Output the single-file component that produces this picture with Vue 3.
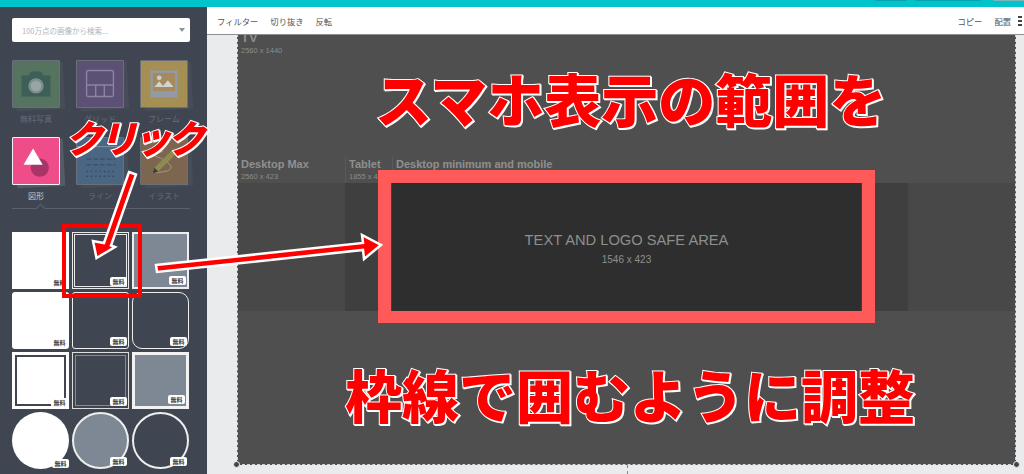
<script setup>
const row1 = [
  { name: '無料写真', cls: 'green', icon: 'camera' },
  { name: 'グリッド', cls: 'purple', icon: 'grid' },
  { name: 'フレーム', cls: 'yellow', icon: 'frame' },
]
const row2 = [
  { name: '図形', cls: 'pink', icon: 'shape' },
  { name: 'ライン', cls: 'blue', icon: 'line' },
  { name: 'イラスト', cls: 'brown', icon: 'pencil' },
]
const categories = [...row1, ...row2]
const shapes = [
  'solid', 'outline-in', 'gray-in',
  'solid r3', 'outline', 'outline r10',
  'solid-notch', 'double', 'gray-thick',
  'solid round', 'gray-ring round', 'outline round',
]
</script>

<template>
  <div class="page">
    <header class="topbar">
      <span class="chip c1"></span>
      <span class="chip c2"></span>
      <span class="chip c3"></span>
    </header>
    <div class="body">
      <aside class="sidebar">
        <div class="search">
          <span>100万点の画像から検索...</span>
          <i class="caret"></i>
        </div>
        <div class="cats">
          <div v-for="c in categories" :key="c.name" class="cat" :class="{ active: c.icon === 'shape' }">
            <div class="stack">
              <div class="back"></div>
              <div class="tile" :class="c.cls">
                <svg viewBox="0 0 48 48" width="46" height="46">
                  <g v-if="c.icon === 'camera'">
                    <path d="M9 15h7l3-4h10l3 4h7v22H9z" fill="#3c5f58" />
                    <circle cx="24" cy="26" r="8" fill="#7f8f8d" />
                    <circle cx="24" cy="26" r="5.5" fill="#98a5a3" />
                  </g>
                  <g v-else-if="c.icon === 'grid'" fill="none" stroke="#8a84a0" stroke-width="1.5">
                    <rect x="10" y="10" width="28" height="27" rx="1.5" />
                    <path d="M10 25h28M19.500 25v12M28.500 25v12" />
                  </g>
                  <g v-else-if="c.icon === 'frame'">
                    <rect x="10" y="10" width="28" height="28" fill="#929aa6" />
                    <rect x="12.500" y="12.500" width="23" height="19" fill="#a58a5c" />
                    <circle cx="19" cy="17.500" r="2.500" fill="#c9cdd2" />
                    <path d="M14 27l5-6 4 5 5-6 6 7z" fill="#d0d3d6" />
                  </g>
                  <g v-else-if="c.icon === 'shape'">
                    <circle cx="28" cy="31" r="9.500" fill="#a93468" />
                    <path d="M21 11l10 17H11z" fill="#fff" />
                  </g>
                  <g v-else-if="c.icon === 'line'">
                    <path d="M0 9h46" stroke="#8095a8" fill="none" />
                    <path d="M10 22h30M10 28h30" stroke="#34495e" stroke-dasharray="5 2" fill="none" />
                    <path d="M10 35h30M10 40h30" stroke="#34495e" stroke-dasharray="1.500 3" fill="none" stroke-width="1.500" />
                  </g>
                  <g v-else>
                    <path d="M12 36q14 0 18-3t-3-8t-12-6t8-5" stroke="#a89a82" fill="none" />
                    <path d="M34 11l4 4-20 20-6 2 2-6z" fill="#8e8a52" />
                    <path d="M12 37l2-6 4 4z" fill="#3c3c3c" />
                  </g>
                </svg>
              </div>
            </div>
            <div class="cat-name">{{ c.name }}</div>
          </div>
        </div>
        <div class="divider"><i></i></div>
        <div class="shapes">
          <div v-for="(s, i) in shapes" :key="i" class="shape" :class="s">
            <b>無料</b>
          </div>
        </div>
      </aside>
      <main class="main">
        <nav class="toolbar">
          <span>フィルター</span>
          <span>切り抜き</span>
          <span>反転</span>
          <span class="grow"></span>
          <span>コピー</span>
          <span>配置</span>
          <svg class="more" width="4" height="14" viewBox="0 0 4 14"><path d="M0 2h4v2H0zM0 6h4v2H0zM0 10h4v2H0z" fill="#444" /></svg>
        </nav>
        <div class="work">
          <div class="canvas">
            <section class="tv">
              <h4>TV</h4>
              <small>2560 x 1440</small>
            </section>
            <section class="heads">
              <div class="h h1"><h5>Desktop Max</h5><small>2560 x 423</small></div>
              <div class="h h2"><h5>Tablet</h5><small>1855 x 423</small></div>
              <div class="h h3"><h5>Desktop minimum and mobile</h5></div>
            </section>
            <section class="band">
              <div class="b-side"></div>
              <div class="b-tablet">
                <div class="safe">
                  <p>TEXT AND LOGO SAFE AREA</p>
                  <small>1546 x 423</small>
                </div>
              </div>
              <div class="b-side"></div>
            </section>
            <i class="dot dl"></i>
            <i class="dot dr"></i>
            <i class="tick"></i>
          </div>
        </div>
      </main>
    </div>

    <div class="frame"></div>
    <div class="redbox"></div>
    <svg class="arrows" width="1024" height="474" viewBox="0 0 1024 474">
      <g stroke="#fff" stroke-width="2.500" stroke-linejoin="miter" fill="#f00">
        <path d="M129 172L136 174.500L111 245.500L115 247L96.500 258L93 241L104 243Z" />
        <path d="M156 265L363 243L362 235L381 245L364 259L363 250L157 272Z" />
      </g>
    </svg>
    <div class="big line1">スマホ表示の範囲を</div>
    <div class="big line2">枠線で囲むように調整</div>
    <div class="click">クリック</div>
  </div>
</template>

<style>
html, body { margin: 0; overflow: hidden; }
</style>

<style scoped>
.page {
  position: relative;
  width: 1024px;
  height: 474px;
  overflow: hidden;
  font-family: "Noto Sans CJK JP", sans-serif;
  background: #e9ebed;
}
.topbar {
  height: 7px;
  background: #00c4cc;
  display: flex;
  justify-content: flex-end;
  padding-right: 0;
}
.chip { display: block; height: 1px; background: #0aa3aa; border-radius: 0 0 2px 2px; }
.c1 { width: 32px; margin-right: 8px; }
.c2 { width: 66px; margin-right: 12px; }
.c3 { width: 31px; background: #7fb5b8; }
.body { display: flex; height: 467px; }
.sidebar {
  width: 207px;
  box-sizing: border-box;
  padding: 11px 17px 0 12px;
  background: #3f4652;
  flex: none;
}
.search {
  height: 24px;
  background: #fff;
  border-radius: 2px;
  display: flex;
  align-items: center;
  justify-content: space-between;
  padding: 0 5px 0 10px;
  font-size: 7.500px;
  color: #b0b4b9;
}
.caret { border: 3px solid transparent; border-top: 4px solid #8d939a; border-bottom: 0; }
.cats {
  margin-top: 18px;
  display: grid;
  grid-template-columns: repeat(3, 48px);
  justify-content: space-between;
  grid-auto-rows: 77px;
  width: 176px;
  row-gap: 0;
}
.stack { position: relative; width: 48px; height: 48px; }
.back {
  position: absolute;
  left: 4px; top: 3px;
  width: 48px; height: 47px;
  background: #464d59;
  transform: rotate(-3deg);
}
.active .back { background: #565c67; }
.tile {
  position: relative;
  box-sizing: border-box;
  width: 48px; height: 48px;
  border: 1px solid #6a707a;
  border-radius: 1px;
}
.tile svg { display: block; }
.green { background: #56735f; }
.purple { background: #5c5075; }
.yellow { background: #a58f55; }
.pink { background: #ee4d89; border-color: #f4f4f6; }
.blue { background: #4a6682; }
.brown { background: #7c6650; }
.cat-name {
  margin-top: 5px;
  font-size: 8px;
  line-height: 12px;
  text-align: center;
  color: #666c77;
}
.active .cat-name { color: #c8ccd2; }
.divider {
  position: relative;
  width: 178px;
  height: 1px;
  margin-top: -6px;
  background: #5b616c;
}
.divider i {
  position: absolute;
  left: 25px; top: -3px;
  width: 6px; height: 6px;
  background: #3f4652;
  border: 1px solid #5b616c;
  border-right: 0; border-bottom: 0;
  transform: rotate(45deg);
}
.shapes {
  margin-top: 23px;
  display: grid;
  grid-template-columns: repeat(3, 57px);
  grid-auto-rows: 57px;
  gap: 3px;
  width: 177px;
}
.shape {
  position: relative;
  box-sizing: border-box;
}
.shape b {
  position: absolute;
  right: 1px; bottom: 2px;
  width: 17px; height: 9px;
  background: #fff;
  border-radius: 2px;
  font-size: 6px;
  line-height: 9px;
  font-weight: 700;
  text-align: center;
  color: #444;
}
.solid, .solid-notch { background: #fff; }
.outline-in { border: 1px solid #e8e8ea; outline: 1px solid #e8e8ea; outline-offset: -3px; background: #3f4652; box-shadow: inset 0 0 0 1px #3f4652; }
.gray-in { background: #7e8894; border: 2px solid #eee; }
.r3 { border-radius: 3px; }
.outline { border: 1.500px solid #eee; border-radius: 3px; }
.r10 { border-radius: 10px; }
.solid-notch { box-shadow: inset 0 0 0 3px #fff, inset 0 0 0 5px #3f4652; }
.double { border: 1px solid #ddd; outline: 1px solid #858b95; outline-offset: -4px; }
.gray-thick { background: #7e8894; border: 3px solid #f2f2f2; }
.round { border-radius: 50%; }
.gray-ring { background: #7e8894; border: 2px solid #eee; }
.outline.round { border-width: 2px; }
.round b { right: 0; bottom: 1px; }

.main { flex: 1; display: flex; flex-direction: column; min-width: 0; }
.toolbar {
  height: 27px;
  background: #fff;
  display: flex;
  align-items: center;
  gap: 12px;
  padding: 0 0 0 10px;
  font-size: 8.300px;
  color: #555;
  box-shadow: 0 1px 0 #8e8e8e;
  position: relative;
  z-index: 1;
}
.grow { flex: 1; }
.more { margin-left: -5px; margin-right: 2px; }
.work { flex: 1; padding: 0 8px 9px 30px; min-height: 0; }
.canvas {
  position: relative;
  height: 431px;
  background: #4f4f4f;
  box-sizing: border-box;
  border: 1px dashed #d4d4d4;
  border-top: 0;
  display: flex;
  flex-direction: column;
  color: #8a8a8a;
  font-family: "Liberation Sans", sans-serif;
}
.tv { height: 123px; padding-left: 3px; box-sizing: border-box; overflow: hidden; }
.tv h4 { margin: -4px 0 0; font-size: 13px; line-height: 16px; font-weight: 700; color: #8c8c8c; }
small { display: block; font-size: 7.500px; line-height: 10px; color: #8c8c8c; }
.tv small { margin-top: 0; }
.heads { display: flex; height: 26px; }
.h { box-sizing: border-box; height: 26px; padding-left: 3px; overflow: hidden; }
h5 { margin: 0; font-size: 11px; line-height: 14px; color: #8f8f8f; font-weight: 700; }
.h small { white-space: nowrap; margin-top: 1px; }
.h1 { width: 107px; }
.h2 { width: 47px; border-left: 1px solid #5a5a5a; }
.h3 { flex: 1; border-left: 1px solid #5a5a5a; }
.band { display: flex; height: 128px; }
.b-side { width: 107px; background: #484848; flex: none; }
.b-tablet { flex: 1; background: #3f3f3f; padding: 0 47px; display: flex; }
.safe {
  flex: 1;
  background: #2e2e2e;
  text-align: center;
  color: #8e8e8e;
}
.safe p { margin: 49px 0 0; font-size: 14.700px; line-height: 17px; }
.safe small { font-size: 10px; line-height: 12px; margin-top: 5px; color: #8e8e8e; }
.dot {
  position: absolute;
  width: 5px; height: 5px;
  border-radius: 50%;
  background: #3f4652;
  border: 1px solid #eee;
  bottom: -4px;
}
.dl { left: -5px; }
.dr { right: -5px; }
.tick {
  position: absolute;
  left: 389px; bottom: -10px;
  height: 9px;
  border-left: 1px dashed #888;
}

.frame {
  position: absolute;
  left: 378px; top: 170px;
  width: 497px; height: 153px;
  box-sizing: border-box;
  border: 13px solid #ff5a5a;
  border-bottom-width: 12px;
}
.redbox {
  position: absolute;
  left: 62px; top: 224px;
  width: 80px; height: 74px;
  box-sizing: border-box;
  border: 4px solid #f00;
}
.arrows { position: absolute; left: 0; top: 0; }
.big, .click {
  position: absolute;
  white-space: nowrap;
  font-weight: 900;
  color: #f00;
  -webkit-text-stroke: 2px #fff;
  paint-order: stroke fill;
  filter: drop-shadow(1.500px 1.500px 0 #fff);
}
.big { font-size: 57px; line-height: 70px; }
.line1 { left: 375px; top: 62px; }
.line2 { left: 345px; top: 358px; }
.click { left: 65px; top: 112px; font-size: 38px; line-height: 50px; letter-spacing: -4px; font-style: italic; }
</style>
